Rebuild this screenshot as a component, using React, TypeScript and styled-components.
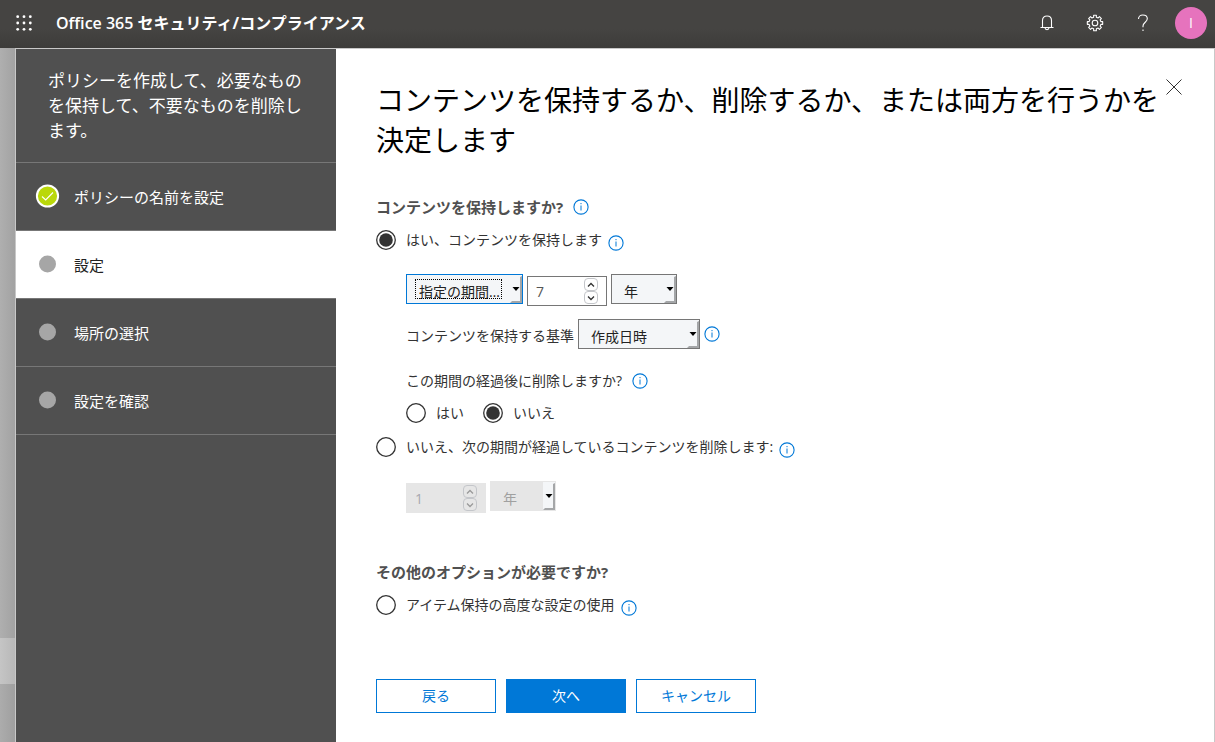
import React, { useState } from "react";
import styled, { createGlobalStyle, css } from "styled-components";

const GlobalStyle = createGlobalStyle`
  * { box-sizing: border-box; }
  body {
    margin: 0;
    background: #a9a9a9;
    color: #333;
    font-family: "Open Sans", "Noto Sans CJK JP", sans-serif;
    font-size: 14px;
    line-height: 20px;
  }
  button, input, select { font: inherit; color: inherit; margin: 0; }
`;

const Page = styled.div`
  display: flex;
  flex-direction: column;
  min-height: 100vh;
`;

const TopBar = styled.header`
  display: flex;
  align-items: flex-start;
  height: 48px;
  background: linear-gradient(#454442 0, #454442 60%, #3d3c3a 100%);
  color: #fff;
`;

const BarButton = styled.button`
  display: flex;
  align-items: center;
  justify-content: center;
  width: 48px;
  height: 46px;
  padding: 0;
  border: 0;
  background: none;
  color: #fff;
`;

const Brand = styled.div`
  flex: 1;
  padding: 11px 0 0 8px;
  font-size: 16px;
  line-height: 24px;
  font-weight: 700;
`;

const BrandLatin = styled.span`
  font-weight: 600;
`;

const Avatar = styled.span`
  display: flex;
  align-items: center;
  justify-content: center;
  width: 32px;
  height: 32px;
  border-radius: 50%;
  background: #e673bd;
  font-size: 14px;
`;

const Body = styled.div`
  display: flex;
  flex: 1;
`;

const Backdrop = styled.div`
  display: flex;
  flex-direction: column;
  width: 15px;
`;

const Shade = styled.div<{ $from: string; $to: string; $height?: number }>`
  ${(p) => (p.$height ? css`height: ${p.$height}px;` : css`flex: 1;`)}
  background: linear-gradient(90deg, ${(p) => p.$from}, ${(p) => p.$to});
`;

const Panel = styled.div`
  display: flex;
  flex: 1;
  border: 1px solid #c8c8c8;
  border-bottom: 0;
  background: #fff;
`;

const Sidebar = styled.aside`
  width: 320px;
  flex-shrink: 0;
  background: #505050;
  color: #fff;
`;

const Intro = styled.p`
  margin: 0;
  padding: 19px 32px;
  border-bottom: 1px solid #777;
  font-size: 17px;
  line-height: 25px;
`;

const Steps = styled.ol`
  margin: 0;
  padding: 0;
  list-style: none;
`;

const Step = styled.li<{ $active?: boolean }>`
  display: flex;
  align-items: center;
  gap: 14px;
  height: 68px;
  padding: 0 0 1px 19px;
  border-bottom: 1px solid #777;
  font-size: 15px;
  ${(p) => p.$active && css`background: #fff; color: #222;`}
`;

const StepText = styled.span`
  padding-top: 2px;
`;

const StepMark = styled.svg`
  width: 25px;
  height: 24px;
`;

const Main = styled.main`
  flex: 1;
  padding: 30px 32px 28px 40px;
`;

const TitleRow = styled.div`
  display: flex;
  align-items: flex-start;
`;

const Title = styled.h1`
  flex: 1;
  margin: 0;
  padding-top: 1px;
  font-size: 28px;
  line-height: 40px;
  font-weight: 400;
  color: #000;
`;

const CloseButton = styled.button`
  display: flex;
  width: 16px;
  height: 16px;
  padding: 0;
  border: 0;
  background: none;
`;

const Section = styled.section<{ $gap: number }>`
  margin-top: ${(p) => p.$gap}px;
`;

const Row = styled.div<{ $gap?: number; $top?: number; $indent?: boolean; $start?: boolean }>`
  display: flex;
  align-items: ${(p) => (p.$start ? "flex-start" : "center")};
  gap: ${(p) => p.$gap ?? 4}px;
  margin-top: ${(p) => p.$top ?? 0}px;
  margin-left: ${(p) => (p.$indent ? 30 : 0)}px;
`;

const Heading = styled.h2`
  margin: 0;
  font-size: 15px;
  line-height: 24px;
  font-weight: 700;
  color: #505050;
`;

const FieldLabel = styled.label`
  padding-top: 4px;
`;

const Question = styled.span`
  line-height: 24px;
`;

const Choice = styled.label`
  display: flex;
  align-items: center;
  gap: 10px;
  height: 20px;
`;

const RadioSlot = styled.span`
  display: grid;
  width: 20px;
  height: 20px;
  & > * { grid-area: 1 / 1; }
`;

const RadioInput = styled.input`
  appearance: none;
  width: 20px;
  height: 20px;
  border-radius: 50%;
`;

const RadioDrawing = styled.svg`
  pointer-events: none;
`;

const InfoButton = styled.button<{ $low?: boolean }>`
  display: flex;
  width: 16px;
  height: 16px;
  padding: 0;
  border: 0;
  background: none;
  ${(p) => p.$low && css`margin-top: 6px;`}
`;

const SelectBox = styled.span<{ $width: number; $active?: boolean; $disabled?: boolean }>`
  position: relative;
  display: flex;
  width: ${(p) => p.$width}px;
  height: 30px;
  border: 1px solid ${(p) => (p.$disabled ? "#e6e6e6" : p.$active ? "#0078d7" : "#767676")};
  background: ${(p) => (p.$disabled ? "#e6e6e6" : "#f4f6f8")};
  color: ${(p) => (p.$disabled ? "#a0a0a0" : "#222")};
`;

const Select = styled.select`
  appearance: none;
  width: 100%;
  padding: 5px 14px 0 12px;
  border: 0;
  border-radius: 0;
  outline: none;
  background: none;
  opacity: 1;
`;

const FocusFrame = styled.span`
  position: absolute;
  inset: 4px 20px 4px 8px;
  border: 1px dotted #000;
  pointer-events: none;
`;

const SelectArrow = styled.svg`
  position: absolute;
  top: 0;
  right: 0;
  pointer-events: none;
`;

const NumberBox = styled.span<{ $disabled?: boolean }>`
  display: flex;
  width: 80px;
  height: 30px;
  margin-top: 2px;
  padding-right: 8px;
  border: 1px solid ${(p) => (p.$disabled ? "#e6e6e6" : "#767676")};
  background: ${(p) => (p.$disabled ? "#e6e6e6" : "#fff")};
  color: ${(p) => (p.$disabled ? "#a8a8b0" : "#555")};
`;

const NumberInput = styled.input`
  flex: 1;
  min-width: 0;
  padding: 2px 0 0 8px;
  border: 0;
  outline: none;
  background: none;
`;

const Spinner = styled.span`
  display: flex;
  flex-direction: column;
  padding-top: 1px;
`;

const SpinButton = styled.button`
  display: flex;
  align-items: center;
  justify-content: center;
  width: 14px;
  height: 13px;
  padding: 0;
  border: 1px solid #c4c6ca;
  border-radius: 4px;
  background: none;
  color: #333;
  &:disabled { color: #999; }
`;

const ActionButton = styled.button<{ $primary?: boolean }>`
  width: 120px;
  height: 34px;
  padding: 0;
  border: 1px solid #0078d7;
  background: ${(p) => (p.$primary ? "#0078d7" : "#fff")};
  color: ${(p) => (p.$primary ? "#fff" : "#0078d7")};
`;

function Info({ low }: { low?: boolean }) {
  return (
    <InfoButton type="button" aria-label="詳細情報" $low={low}>
      <svg width="16" height="16" viewBox="0 0 16 16" fill="none" stroke="#0078d7">
        <circle cx="8" cy="8" r="7.100" strokeWidth="1.1" />
        <path d="M8 6.5V11.5M8 4V5.2" />
      </svg>
    </InfoButton>
  );
}

type RadioProps = {
  name: string;
  label: string;
  checked: boolean;
  onSelect: () => void;
};

function Radio({ name, label, checked, onSelect }: RadioProps) {
  return (
    <Choice>
      <RadioSlot>
        <RadioInput type="radio" name={name} checked={checked} onChange={onSelect} />
        <RadioDrawing width="20" height="20" viewBox="0 0 20 20" aria-hidden="true">
          <circle cx="10" cy="10" r="9.300" fill="none" stroke="#333" strokeWidth="1.300" />
          {checked && <circle cx="10" cy="10" r="6.800" fill="#333" />}
        </RadioDrawing>
      </RadioSlot>
      <span>{label}</span>
    </Choice>
  );
}

type DropDownProps = {
  id?: string;
  label?: string;
  width: number;
  options: string[];
  active?: boolean;
  disabled?: boolean;
};

function DropDown({ id, label, width, options, active, disabled }: DropDownProps) {
  return (
    <SelectBox $width={width} $active={active} $disabled={disabled}>
      <Select id={id} aria-label={label} disabled={disabled}>
        {options.map((o) => (
          <option key={o}>{o}</option>
        ))}
      </Select>
      {active && <FocusFrame />}
      <SelectArrow width="12" height="28" viewBox="0 0 12 28">
        {disabled && <path d="M0 0H12V28H0Z" fill="#f4f6f8" />}
        <path d="M10 2L12 1V28H0L2 26H10Z" fill="#a4a6a8" />
        <path d="M2.500 12H9.500L6 16Z" fill="#000" />
      </SelectArrow>
    </SelectBox>
  );
}

type NumberFieldProps = { label: string; initial: number; disabled?: boolean };

function NumberField({ label, initial, disabled }: NumberFieldProps) {
  const [value, setValue] = useState(initial);
  return (
    <NumberBox $disabled={disabled}>
      <NumberInput
        type="text"
        inputMode="numeric"
        aria-label={label}
        value={value}
        disabled={disabled}
        onChange={(e) => setValue(Number(e.target.value) || 0)}
      />
      <Spinner>
        <SpinButton type="button" aria-label="増やす" disabled={disabled} onClick={() => setValue(value + 1)}>
          <svg width="8" height="6" viewBox="0 0 8 6" fill="none" stroke="currentColor" strokeWidth="1.3">
            <path d="M1 4.500L4 1.500L7 4.500" />
          </svg>
        </SpinButton>
        <SpinButton type="button" aria-label="減らす" disabled={disabled} onClick={() => setValue(Math.max(0, value - 1))}>
          <svg width="8" height="6" viewBox="0 0 8 6" fill="none" stroke="currentColor" strokeWidth="1.3">
            <path d="M1 1.500L4 4.500L7 1.500" />
          </svg>
        </SpinButton>
      </Spinner>
    </NumberBox>
  );
}

const steps = [
  { text: "ポリシーの名前を設定", done: true },
  { text: "設定", active: true },
  { text: "場所の選択" },
  { text: "設定を確認" },
];

const dots = [1.700, 8, 14.300];

const gearPath = Array.from({ length: 8 }, (_, i) => {
  const at = (deg: number, r: number) => {
    const a = ((i * 45 + deg - 90) * Math.PI) / 180;
    return `${(9 + r * Math.cos(a)).toFixed(2)} ${(9 + r * Math.sin(a)).toFixed(2)}`;
  };
  return `${i ? "L" : "M"}${at(-10, 7.8)}L${at(10, 7.8)}L${at(13, 6)}L${at(32, 6)}`;
}).join("") + "Z";

export default function App() {
  const [mode, setMode] = useState("keep");
  const [remove, setRemove] = useState("no");
  return (
    <Page>
      <GlobalStyle />
      <TopBar>
        <BarButton type="button" aria-label="アプリ起動ツール">
          <svg width="16" height="16" viewBox="0 0 16 16" fill="#fff">
            {dots.map((y) =>
              dots.map((x) => <circle key={`${x}-${y}`} cx={x} cy={y} r="1.4" />)
            )}
          </svg>
        </BarButton>
        <Brand>
          <BrandLatin>Office 365</BrandLatin> セキュリティ/コンプライアンス
        </Brand>
        <BarButton type="button" aria-label="通知">
          <svg width="14" height="16" viewBox="0 0 14 16" fill="none" stroke="#fff" strokeWidth="1.1">
            <path d="M0.500 12.500H13.500M2.500 12.500V5.500C2.500 2.700 4.300 1 7 1S11.500 2.700 11.500 5.500V12.500M5 12.700C5.200 15.200 8.800 15.200 9 12.700" />
          </svg>
        </BarButton>
        <BarButton type="button" aria-label="設定">
          <svg width="18" height="18" viewBox="0 0 18 18" fill="none" stroke="#fff" strokeWidth="1.1" strokeLinejoin="round">
            <path d={gearPath} />
            <circle cx="9" cy="9" r="2.800" />
          </svg>
        </BarButton>
        <BarButton type="button" aria-label="ヘルプ">
          <svg width="12" height="18" viewBox="0 0 12 18" fill="none" stroke="#fff" strokeWidth="1.1">
            <path d="M1.500 5C1.500 2.500 3.300 1 5.800 1S10.300 2.500 10.300 4.800C10.300 8 6 8.500 6 12V13.200M6 15.500V17" />
          </svg>
        </BarButton>
        <BarButton type="button" aria-label="アカウント">
          <Avatar>I</Avatar>
        </BarButton>
      </TopBar>
      <Body>
        <Backdrop>
          <Shade $from="#afafaf" $to="#a2a2a2" />
          <Shade $from="#c5c5c5" $to="#b8b8b8" $height={46} />
          <Shade $from="#acacac" $to="#9f9f9f" $height={58} />
        </Backdrop>
        <Panel>
          <Sidebar>
            <Intro>ポリシーを作成して、必要なものを保持して、不要なものを削除します。</Intro>
            <Steps>
              {steps.map((s) => (
                <Step key={s.text} $active={s.active}>
                  <StepMark viewBox="0 0 25 24" aria-hidden="true">
                    {s.done ? (
                      <>
                        <circle cx="12.500" cy="12" r="10.600" fill="#bad80a" stroke="#fff" strokeWidth="2" />
                        <path d="M7 12.500L10.700 16L18 8.500" fill="none" stroke="#fff" strokeWidth="1.1" />
                      </>
                    ) : (
                      <circle cx="12.500" cy="12" r="8.500" fill="#a6a6a6" />
                    )}
                  </StepMark>
                  <StepText>{s.text}</StepText>
                </Step>
              ))}
            </Steps>
          </Sidebar>
          <Main>
            <TitleRow>
              <Title>コンテンツを保持するか、削除するか、または両方を行うかを決定します</Title>
              <CloseButton type="button" aria-label="閉じる">
                <svg width="16" height="16" viewBox="0 0 16 16" stroke="#333" strokeWidth="1">
                  <path d="M0.500 0.500L15.500 15.500M15.500 0.500L0.500 15.500" />
                </svg>
              </CloseButton>
            </TitleRow>

            <Section $gap={35}>
              <Row $gap={10}>
                <Heading>コンテンツを保持しますか?</Heading>
                <Info />
              </Row>
              <Row $top={10} $gap={6}>
                <Radio name="mode" label="はい、コンテンツを保持します" checked={mode === "keep"} onSelect={() => setMode("keep")} />
                <Info low />
              </Row>
              <Row $top={23} $indent $start>
                <DropDown label="保持期間の種類" width={117} options={["指定の期間…"]} active />
                <NumberField label="保持期間" initial={7} />
                <DropDown label="保持期間の単位" width={66} options={["年"]} />
              </Row>
              <Row $top={13} $indent>
                <FieldLabel htmlFor="basis">コンテンツを保持する基準</FieldLabel>
                <DropDown id="basis" width={122} options={["作成日時"]} />
                <Info />
              </Row>
              <Row $top={20} $gap={10} $indent>
                <Question>この期間の経過後に削除しますか?</Question>
                <Info />
              </Row>
              <Row $top={10} $gap={19} $indent>
                <Radio name="remove" label="はい" checked={remove === "yes"} onSelect={() => setRemove("yes")} />
                <Radio name="remove" label="いいえ" checked={remove === "no"} onSelect={() => setRemove("no")} />
              </Row>
              <Row $top={13} $gap={6}>
                <Radio name="mode" label="いいえ、次の期間が経過しているコンテンツを削除します:" checked={mode === "delete"} onSelect={() => setMode("delete")} />
                <Info low />
              </Row>
              <Row $top={23} $indent $start>
                <NumberField label="削除までの期間" initial={1} disabled />
                <DropDown label="削除までの期間の単位" width={66} options={["年"]} disabled />
              </Row>
            </Section>

            <Section $gap={47}>
              <Heading>その他のオプションが必要ですか?</Heading>
              <Row $top={10} $gap={6}>
                <Radio name="mode" label="アイテム保持の高度な設定の使用" checked={mode === "advanced"} onSelect={() => setMode("advanced")} />
                <Info low />
              </Row>
            </Section>

            <Row $top={63} $gap={10}>
              <ActionButton type="button">戻る</ActionButton>
              <ActionButton type="button" $primary>次へ</ActionButton>
              <ActionButton type="button">キャンセル</ActionButton>
            </Row>
          </Main>
        </Panel>
      </Body>
    </Page>
  );
}
